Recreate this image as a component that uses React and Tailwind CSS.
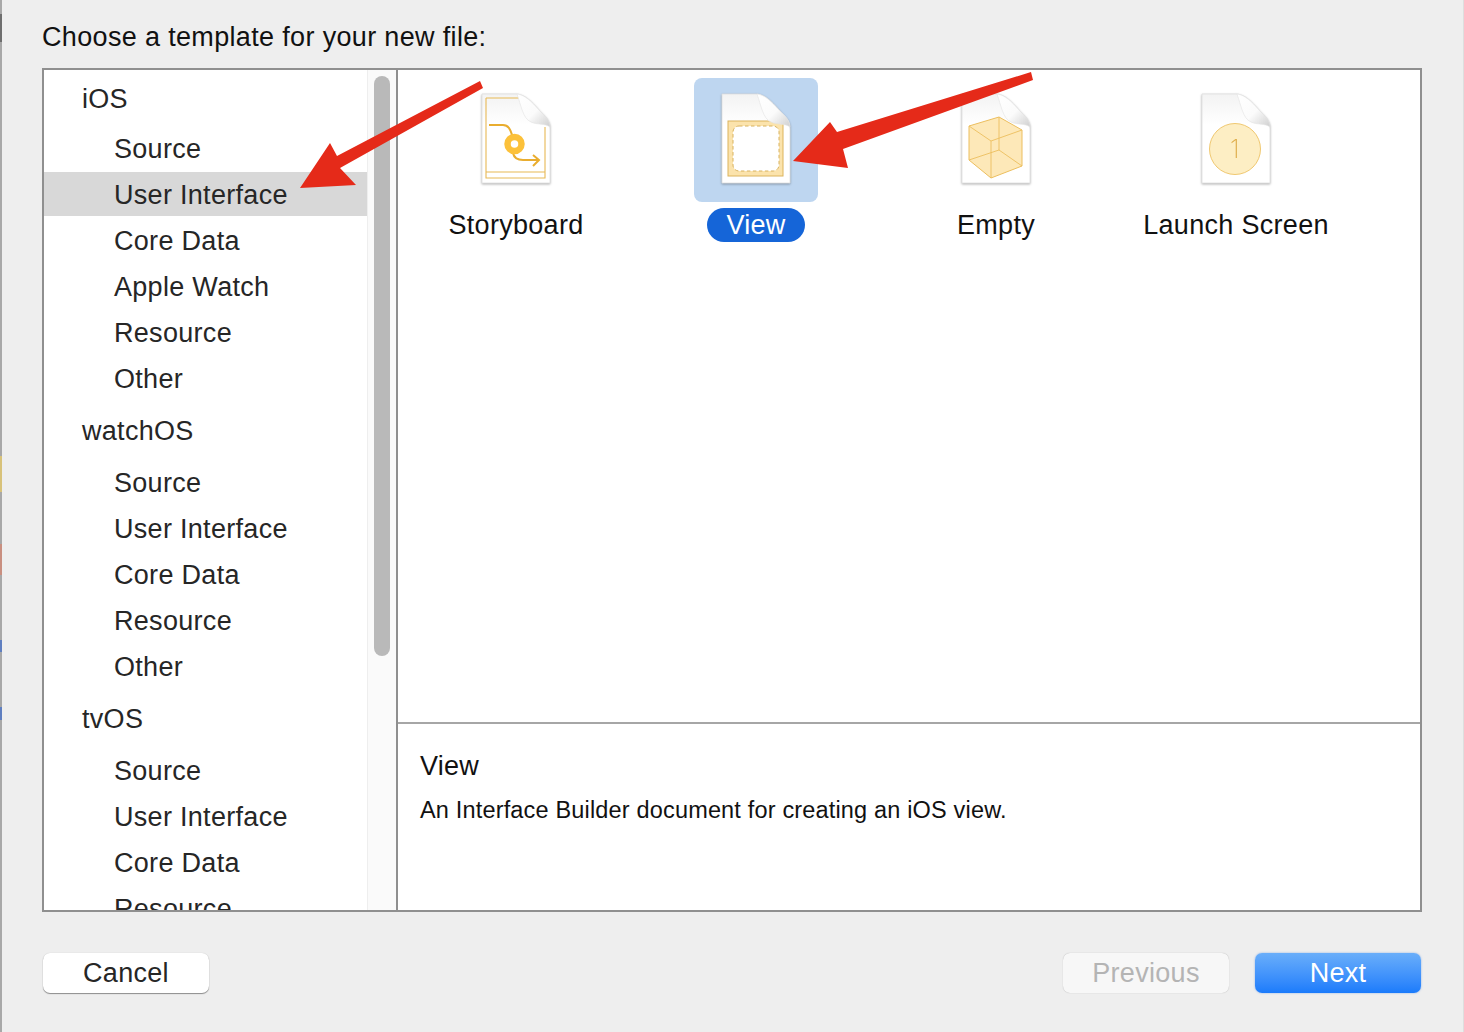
const sections = [
  { name: 'iOS', first: true, items: ['Source', 'User Interface', 'Core Data', 'Apple Watch', 'Resource', 'Other'] },
  { name: 'watchOS', items: ['Source', 'User Interface', 'Core Data', 'Resource', 'Other'] },
  { name: 'tvOS', items: ['Source', 'User Interface', 'Core Data', 'Resource', 'Other'] },
]

const stripSegments = [
  ['h-[14px]', 'bg-[#a8a8a8]'],
  ['h-[28px]', 'bg-[#6e6e6e]'],
  ['h-[414px]', 'bg-[#a8a8a8]'],
  ['h-[36px]', 'bg-[#d8c27a]'],
  ['h-[52px]', 'bg-[#a8a8a8]'],
  ['h-[31px]', 'bg-[#c98f80]'],
  ['h-[65px]', 'bg-[#a8a8a8]'],
  ['h-[12px]', 'bg-[#5f7fc0]'],
  ['h-[55px]', 'bg-[#a8a8a8]'],
  ['h-[13px]', 'bg-[#5f7fc0]'],
  ['h-[312px]', 'bg-[#a8a8a8]'],
]

function DocIcon({ children }) {
  return (
    <svg width="70" height="92" viewBox="0 0 70 92" className="block drop-shadow-[0_1px_1px_rgba(0,0,0,0.3)]">
      <defs>
        <linearGradient id="docFill" x1="0" y1="0" x2="0" y2="1">
          <stop offset="0" stopColor="#f3f3f3" />
          <stop offset="0.35" stopColor="#ffffff" />
        </linearGradient>
        <linearGradient id="foldFill" x1="0" y1="0" x2="1" y2="1">
          <stop offset="0" stopColor="#ffffff" />
          <stop offset="0.55" stopColor="#fbfbfb" />
          <stop offset="1" stopColor="#cfcfcf" />
        </linearGradient>
      </defs>
      <path d="M1 1H36C44 2 50 8 58 17C64 23 69 27 69 36V90H1Z" fill="url(#docFill)" stroke="#dedede" strokeWidth="0.8" />
      {children}
      <path d="M36 1C44 2 50 8 58 17C64 23 69 27 69 34C64 30 56 32 50 29C42 26 40 12 36 1Z" fill="url(#foldFill)" stroke="#e2e2e2" strokeWidth="0.6" />
    </svg>
  )
}

function StoryboardIcon() {
  return (
    <DocIcon>
      <path d="M5 5H38M5 5V85H64V34M5 79H64" fill="none" stroke="#e8b955" strokeWidth="1.1" />
      <path d="M8 32H22C30 32 30 42 33 46" fill="none" stroke="#e9ad2f" strokeWidth="2" />
      <path d="M32 60C33 65 36 67 42 67H58M52 62L58 67L52 73" fill="none" stroke="#e9ad2f" strokeWidth="2" />
      <circle cx="33.5" cy="51" r="7" fill="#ffffff" stroke="#fcc13a" strokeWidth="6.5" />
    </DocIcon>
  )
}

function ViewIcon() {
  return (
    <DocIcon>
      <rect x="7" y="28" width="55" height="55" fill="#fbe3ac" stroke="#dcb45c" strokeWidth="1" />
      <rect x="12" y="33" width="46" height="45" rx="6" fill="#ffffff" stroke="#d8b25e" strokeWidth="1" strokeDasharray="3.5 2.5" />
    </DocIcon>
  )
}

function EmptyIcon() {
  return (
    <DocIcon>
      <path d="M8 33L38 24L61 37V73L30 85L8 67Z" fill="#fde8b8" stroke="#ecbe5e" strokeWidth="1" />
      <path d="M8 33L30 48L61 37M30 48V85M38 24V57M8 67L38 57L61 73" fill="none" stroke="#ecbe5e" strokeWidth="0.9" />
    </DocIcon>
  )
}

function LaunchIcon() {
  return (
    <DocIcon>
      <circle cx="34" cy="56" r="25.5" fill="#fdeec4" stroke="#f0c870" strokeWidth="1" />
      <text x="34" y="65" textAnchor="middle" fontSize="25" fontFamily="Inter, sans-serif" fontWeight="200" fill="#dfae4c">1</text>
    </DocIcon>
  )
}

const templates = [
  { name: 'Storyboard', icon: <StoryboardIcon /> },
  { name: 'View', icon: <ViewIcon />, selected: true },
  { name: 'Empty', icon: <EmptyIcon /> },
  { name: 'Launch Screen', icon: <LaunchIcon /> },
]

function Sidebar() {
  return (
    <div className="flex w-[354px] shrink-0 border-r-2 border-[#8f8f8f] overflow-hidden">
      <div className="w-[323px] shrink-0 text-[27px] tracking-[0.3px] text-[#262626]">
        {sections.map((s) => (
          <div key={s.name}>
            <div className={`flex items-center pl-[38px] ${s.first ? 'h-[55px] pt-[4px]' : 'h-[58px] pt-[2px]'}`}>{s.name}</div>
            {s.items.map((item) => (
              <div key={item} className="h-[46px] py-px">
                <div className={`flex h-full items-center pl-[70px] pt-[2px] ${s.first && item === 'User Interface' ? 'bg-[#d8d8d8]' : ''}`}>
                  {item}
                </div>
              </div>
            ))}
          </div>
        ))}
      </div>
      <div className="flex-1 border-l border-[#eeeeee] bg-[#fafafa] pl-[6px] pt-[6px]">
        <div className="h-[580px] w-4 rounded-full bg-[#b9b9b9]" />
      </div>
    </div>
  )
}

function TemplateGrid() {
  return (
    <div className="flex h-[652px] -ml-[2px] pt-2 text-[27px] tracking-[0.3px] text-[#111111]">
      {templates.map((t) => (
        <div key={t.name} className="flex w-[240px] flex-col items-center">
          <div className={`flex h-[124px] w-[124px] items-center justify-center rounded-[8px] pb-[3px] ${t.selected ? 'bg-[#bed6f0]' : ''}`}>
            {t.icon}
          </div>
          <div className={`mt-[6px] flex h-[34px] items-center rounded-full whitespace-nowrap ${t.selected ? 'w-[98px] justify-center bg-[#1565d8] text-white' : ''}`}>
            {t.name}
          </div>
        </div>
      ))}
    </div>
  )
}

export default function App() {
  return (
    <div className="relative flex h-[1032px] w-[1464px] overflow-hidden bg-[#eeeeee] font-['Liberation_Sans',Arial,sans-serif]">
      <div className="w-[2px] shrink-0">
        {stripSegments.map(([h, c], i) => (
          <div key={i} className={`${h} ${c}`} />
        ))}
      </div>
      <div className="flex flex-1 flex-col border-r border-[#dedede] pl-10 pr-[41px]">
        <div className="flex h-[68px] items-center pt-[6px] text-[27px] tracking-[0.34px] text-[#111111]">Choose a template for your new file:</div>
        <div className="flex h-[844px] border-2 border-[#8f8f8f] bg-white">
          <Sidebar />
          <div className="flex flex-1 flex-col">
            <TemplateGrid />
            <div className="flex-1 border-t-2 border-[#a6a6a6] pl-[22px] text-[#111111]">
              <div className="mt-[23px] text-[27px] leading-[38px] tracking-[0.2px]">View</div>
              <div className="mt-[10px] text-[23.5px] leading-[30px] tracking-[0.17px]">An Interface Builder document for creating an iOS view.</div>
            </div>
          </div>
        </div>
        <div className="mt-[41px] flex items-start text-[27px] tracking-[0.3px]">
          <button className="flex h-10 w-[166px] ml-px items-center justify-center rounded-[7px] bg-white text-[#262626] shadow-[0_1px_1px_rgba(0,0,0,0.4),0_0_1px_rgba(0,0,0,0.2)]">Cancel</button>
          <button className="ml-auto flex h-10 w-[166px] items-center justify-center rounded-[7px] bg-[#f7f7f7] text-[#b4b4b4] shadow-[0_0_1px_rgba(0,0,0,0.3)]">Previous</button>
          <button className="ml-[26px] mr-px flex h-10 w-[166px] items-center justify-center rounded-[7px] bg-gradient-to-b from-[#69aefa] to-[#1a7bfb] text-white shadow-[0_0_2px_rgba(30,110,230,0.5)]">Next</button>
        </div>
      </div>
      <svg width="1464" height="1032" className="pointer-events-none absolute inset-0">
        <path d="M480 81L483 88L340 168L356 185L300 188L330 143L337 156Z" fill="#e52a19" />
        <path d="M1031 72L1033 80L843 149L848 168L793 161L830 122L837 132Z" fill="#e52a19" />
      </svg>
    </div>
  )
}
